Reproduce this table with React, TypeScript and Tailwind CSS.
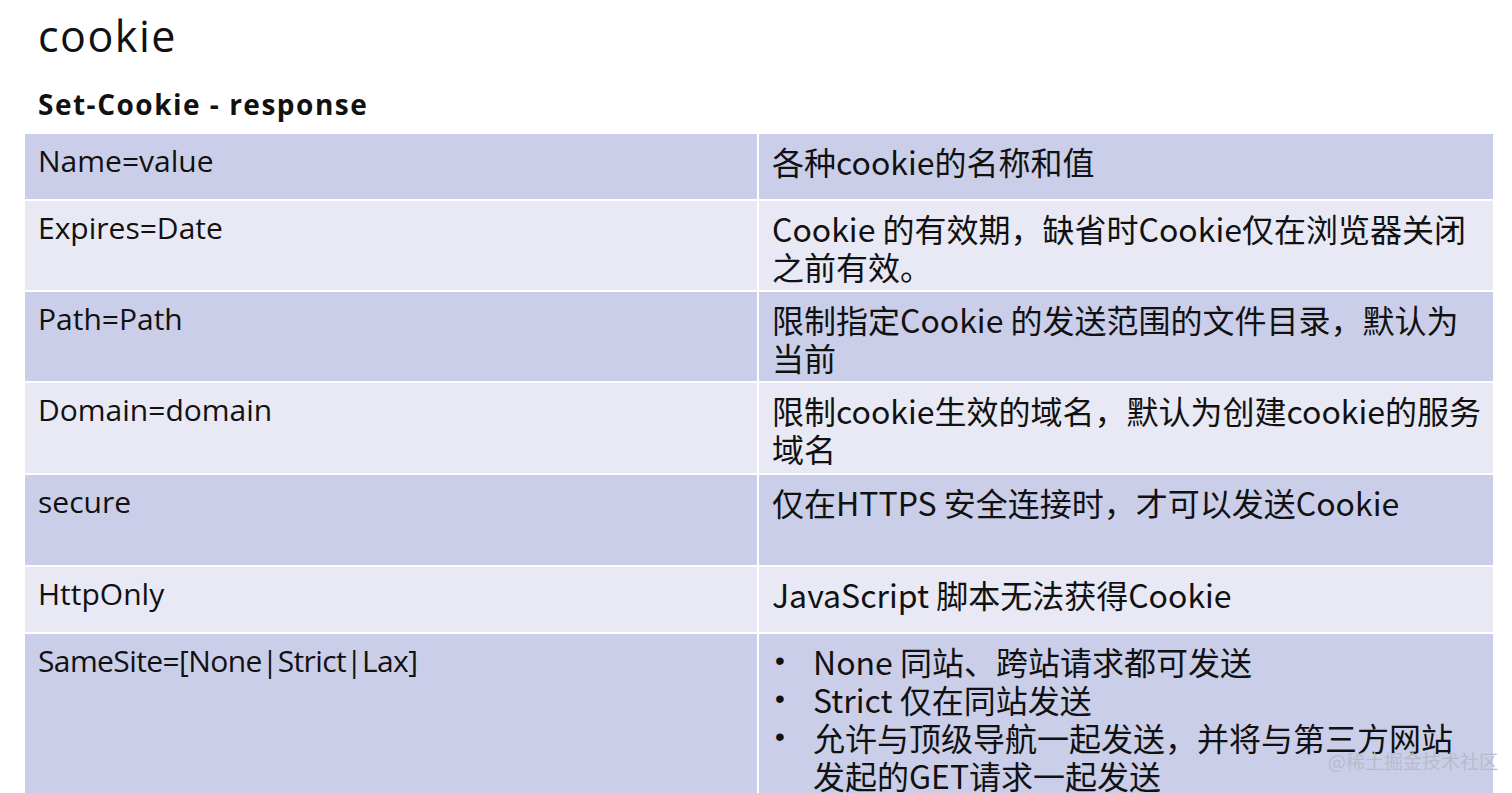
import React from "react";

const leftFont = { fontFamily: '"Open Sans", "Noto Sans CJK SC", sans-serif' };
const rightFont = { fontFamily: '"Liberation Sans Narrow", "Noto Sans CJK SC", sans-serif' };
const bulletFont = { fontFamily: '"Liberation Sans", sans-serif' };

type Row = { k: string; v: React.ReactNode; h: string; dark: boolean };

function Left({ children, tight }: { children: React.ReactNode; tight?: boolean }) {
  return (
    <div
      className={`pl-[13px] pt-[8px] text-[30px] leading-[38px] text-[#111] whitespace-nowrap ${tight ? "tracking-[-0.6px]" : ""}`}
      style={leftFont}
    >
      {children}
    </div>
  );
}

function Right({ children }: { children: React.ReactNode }) {
  return (
    <div className="pl-[13px] pt-[8px] text-[32px] leading-[38px] text-[#111] whitespace-nowrap" style={rightFont}>
      {children}
    </div>
  );
}

export default function App() {
  const rows: Row[] = [
    { k: "Name=value", v: <>各种cookie的名称和值</>, h: "h-[65px]", dark: true },
    {
      k: "Expires=Date",
      v: (
        <>
          Cookie 的有效期，缺省时Cookie仅在浏览器关闭
          <br />
          之前有效。
        </>
      ),
      h: "h-[89px]",
      dark: false,
    },
    {
      k: "Path=Path",
      v: (
        <>
          限制指定Cookie 的发送范围的文件目录，默认为
          <br />
          当前
        </>
      ),
      h: "h-[89px]",
      dark: true,
    },
    {
      k: "Domain=domain",
      v: (
        <>
          限制cookie生效的域名，默认为创建cookie的服务
          <br />
          域名
        </>
      ),
      h: "h-[90px]",
      dark: false,
    },
    { k: "secure", v: <>仅在HTTPS 安全连接时，才可以发送Cookie</>, h: "h-[90px]", dark: true },
    { k: "HttpOnly", v: <>JavaScript 脚本无法获得Cookie</>, h: "h-[65px]", dark: false },
  ];

  const bullets: React.ReactNode[] = [
    <>None 同站、跨站请求都可发送</>,
    <>Strict 仅在同站发送</>,
    <>
      允许与顶级导航一起发送，并将与第三方网站
      <br />
      发起的GET请求一起发送
    </>,
  ];

  return (
    <div className="relative w-[1512px] h-[793px] overflow-hidden bg-white">
      <div className="pl-[38px] pt-[12px] text-[43px] leading-[48px] text-[#111] tracking-[1.5px]" style={leftFont}>
        cookie
      </div>
      <div className="mt-[28px] pl-[38px] text-[28px] leading-[32px] font-bold text-[#111] tracking-[1.5px]" style={leftFont}>
        Set-Cookie - response
      </div>
      <div className="mt-[14px] ml-[25px] grid grid-cols-[732px_734px] gap-[2px]">
        {rows.map((r) => (
          <React.Fragment key={r.k}>
            <div className={`${r.h} ${r.dark ? "bg-[#cbcee8]" : "bg-[#e8e9f4]"}`}>
              <Left>{r.k}</Left>
            </div>
            <div className={`${r.h} ${r.dark ? "bg-[#cbcee8]" : "bg-[#e8e9f4]"}`}>
              <Right>{r.v}</Right>
            </div>
          </React.Fragment>
        ))}
        <div className="h-[170px] bg-[#cbcee8]">
          <Left tight>SameSite=[None|Strict|Lax]</Left>
        </div>
        <div className="h-[170px] bg-[#cbcee8]">
          <div className="pl-[16px] pt-[8px] text-[32px] leading-[38px] text-[#111] whitespace-nowrap" style={rightFont}>
            {bullets.map((b, i) => (
              <div key={i} className="flex">
                <span className="w-[38px] shrink-0 text-[28px]" style={bulletFont}>
                  •
                </span>
                <span>{b}</span>
              </div>
            ))}
          </div>
        </div>
      </div>
      <div
        className="absolute left-[1328px] top-[750px] text-[19px] leading-[22px] text-[#b9bbcd] whitespace-nowrap"
        style={{ fontFamily: '"Noto Sans CJK SC", sans-serif' }}
      >
        @稀土掘金技术社区
      </div>
    </div>
  );
}
